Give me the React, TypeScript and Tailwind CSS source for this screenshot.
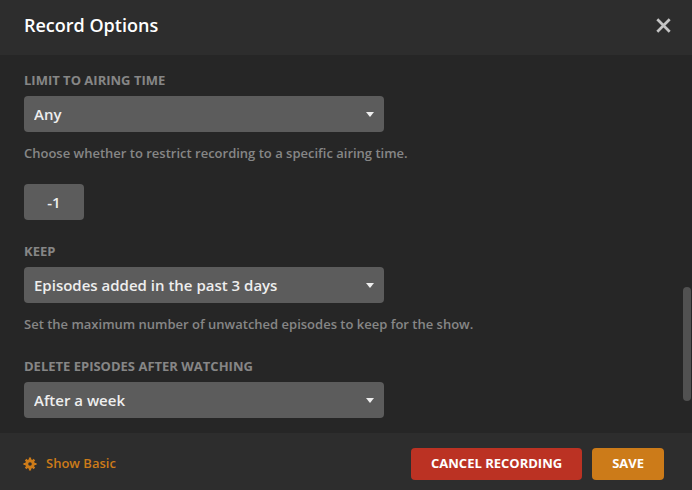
import { useState } from "react";

type SelectFieldProps = {
  id: string;
  label: string;
  options: string[];
  help?: string;
};

function SelectField({ id, label, options, help }: SelectFieldProps) {
  const [value, setValue] = useState(options[0]);

  return (
    <div>
      <label
        htmlFor={id}
        className="mb-1 block text-[13px] leading-[23px] font-bold text-[#868686] uppercase"
      >
        {label}
      </label>
      <div className="relative max-w-[360px]">
        <select
          id={id}
          value={value}
          onChange={(e) => setValue(e.target.value)}
          className="h-9 w-full appearance-none rounded bg-[#5c5c5c] pr-8 pl-2.5 text-[15px] font-semibold text-[#eee] outline-none focus-visible:ring-2 focus-visible:ring-[#cc7b19]"
        >
          {options.map((option) => (
            <option key={option}>{option}</option>
          ))}
        </select>
        <svg
          viewBox="0 0 8 5"
          aria-hidden="true"
          className="pointer-events-none absolute top-4 right-2.5 h-[5px] w-2 fill-[#eee]"
        >
          <path d="M0 0h8L4 5z" />
        </svg>
      </div>
      {help ? (
        <p className="mt-[11px] text-[13px] leading-[21px] font-semibold text-[#868686]">
          {help}
        </p>
      ) : null}
    </div>
  );
}

function GearIcon() {
  return (
    <svg viewBox="0 0 14 14" aria-hidden="true" className="h-[14px] w-[14px]">
      <g stroke="currentColor" strokeWidth="2.2">
        <path d="M7 .5v13M.5 7h13" />
        <path d="m2.6 2.6 8.8 8.8M11.4 2.6l-8.8 8.8" />
      </g>
      <circle cx="7" cy="7" r="4.8" fill="currentColor" />
      <circle cx="7" cy="7" r="1.8" fill="#2d2d2d" />
    </svg>
  );
}

export default function App() {
  const [limit, setLimit] = useState("-1");

  return (
    <div
      role="dialog"
      aria-labelledby="record-title"
      className="flex h-screen flex-col bg-[#262626] font-['Open_Sans','Noto_Sans',sans-serif]"
    >
      <header className="flex shrink-0 items-center justify-between bg-[#2d2d2d] pt-3 pr-[17px] pb-4 pl-6">
        <h1 id="record-title" className="text-lg leading-[27px] font-semibold text-white">
          Record Options
        </h1>
        <button type="button" aria-label="Close" className="p-1 text-[#c4c4c4] hover:text-white">
          <svg viewBox="0 0 15 15" aria-hidden="true" className="h-[15px] w-[15px]">
            <path d="m1.3 1.3 12.4 12.4M13.7 1.3 1.3 13.7" stroke="currentColor" strokeWidth="2.7" />
          </svg>
        </button>
      </header>

      <main className="relative flex min-h-0 flex-1 flex-col">
        <form className="flex flex-1 flex-col gap-5 overflow-y-auto px-6 pt-3.5 [scrollbar-width:none]">
          <SelectField
            id="airing-time"
            label="Limit to airing time"
            options={["Any", "Original airing time"]}
            help="Choose whether to restrict recording to a specific airing time."
          />
          <input
            type="text"
            aria-label="Limit"
            value={limit}
            onChange={(e) => setLimit(e.target.value)}
            className="h-9 w-[60px] shrink-0 rounded bg-[#5c5c5c] px-2 text-center text-[15px] font-semibold text-[#eee] outline-none focus-visible:ring-2 focus-visible:ring-[#cc7b19]"
          />
          <SelectField
            id="keep"
            label="Keep"
            options={["Episodes added in the past 3 days", "All episodes"]}
            help="Set the maximum number of unwatched episodes to keep for the show."
          />
          <SelectField
            id="delete-after"
            label="Delete episodes after watching"
            options={["After a week", "Never"]}
          />
        </form>
        {/* scrollbar thumb */}
        <div className="absolute right-px bottom-8 h-[114px] w-2 rounded-full bg-[#515151]" />
      </main>

      <footer className="flex shrink-0 items-center justify-between bg-[#2d2d2d] pt-[15px] pr-7 pb-2.5 pl-[23px]">
        <button
          type="button"
          className="flex items-center gap-[9px] text-[13px] font-semibold text-[#cc7b19] hover:text-[#e59029]"
        >
          <GearIcon />
          Show Basic
        </button>
        <div className="flex gap-2.5">
          <button
            type="button"
            className="h-8 rounded bg-[#bb3223] px-5 text-[13px] font-bold text-white uppercase hover:bg-[#d13a2c]"
          >
            Cancel Recording
          </button>
          <button
            type="button"
            className="h-8 rounded bg-[#cc7b19] px-5 text-[13px] font-bold text-white uppercase hover:bg-[#e59029]"
          >
            Save
          </button>
        </div>
      </footer>
    </div>
  );
}
